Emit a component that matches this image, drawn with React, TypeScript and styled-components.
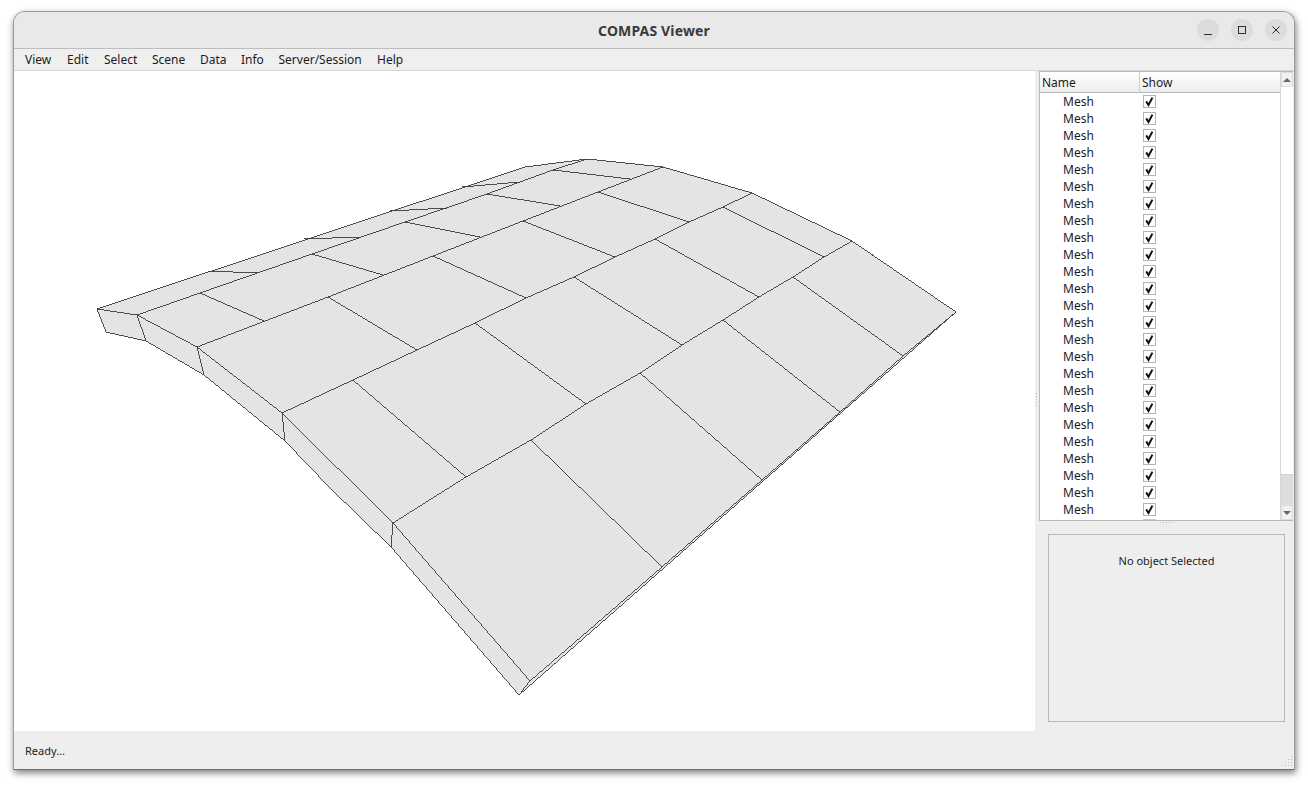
import React from 'react'
import styled, { createGlobalStyle } from 'styled-components'

const GlobalStyle = createGlobalStyle`
  html, body {
    margin: 0;
    padding: 0;
    background: #ffffff;
    font-family: "Noto Sans", "Liberation Sans", sans-serif;
    font-size: 12px;
    color: #1c1c1c;
  }
`

const MENU_ITEMS = [
  { label: 'View', width: 42 },
  { label: 'Edit', width: 37 },
  { label: 'Select', width: 48 },
  { label: 'Scene', width: 48 },
  { label: 'Data', width: 41 },
  { label: 'Info', width: 37.5 },
  { label: 'Server/Session', width: 98.5 },
  { label: 'Help', width: 40 },
]
const ROW_COUNT = 25

// mesh outlines, traced in page coordinates
const SILHOUETTE =
  '97,309 525,167 587,159 663,167 752,193 852,241 956,312 519,695 391,547 330,488 285,441 204,375 146,341 106,332'

const LINES = [
  // ridges, back to front
  '137,315 200,293 312,254 405,222 487,194 553,170 587,159',
  '197,347 328,297 433,256 523,221 598,192 663,167',
  '282,413 353,380 417,350 475,323 526,298 574,277 615,257 655,239 689,222 723,207 752,193',
  '393,523 466,477 531,440 586,404 640,373 682,345 723,320 759,297 793,277 824,257 852,241',
  // near edge
  '97,309 137,315 197,347 282,413 393,523 530,681',
  '521,692 530,681 662,567 762,480 840,412 903,356 956,312',
  // thickness ticks
  '137,315 146,341',
  '197,347 204,375',
  '282,413 285,441',
  '393,523 391,547',
  // top strip
  '208,271 258,273',
  '304,239 360,237',
  '390,211 447,208',
  '462,187 520,182',
  // ridge 1 to 2
  '200,293 264,321',
  '312,254 383,275',
  '405,222 480,237',
  '487,194 560,206',
  '553,170 630,179',
  // ridge 2 to 3
  '328,297 417,350',
  '433,256 526,298',
  '523,221 615,257',
  '598,192 689,222',
  // ridge 3 to 4
  '353,380 466,477',
  '475,323 586,404',
  '574,277 682,345',
  '655,239 759,297',
  '723,207 824,257',
  // ridge 4 to near edge
  '531,440 662,567',
  '640,373 762,480',
  '723,320 840,412',
  '793,277 903,356',
]

function App() {
  return (
    <Desktop>
      <GlobalStyle />
      <Window>
        <TitleBar>
          <span />
          <Title>COMPAS Viewer</Title>
          <WindowButtons>
            <RoundButton>
              <svg width="12" height="12" viewBox="0 0 12 12">
                <path d="M2 10.5h8" stroke="#2e2e2e" strokeWidth="1" fill="none" />
              </svg>
            </RoundButton>
            <RoundButton>
              <svg width="12" height="12" viewBox="0 0 12 12">
                <rect x="2.5" y="2.5" width="7" height="7" stroke="#2e2e2e" strokeWidth="1" fill="none" />
              </svg>
            </RoundButton>
            <RoundButton>
              <svg width="12" height="12" viewBox="0 0 12 12">
                <path d="M2.5 2.5l7 7M9.5 2.5l-7 7" stroke="#2e2e2e" strokeWidth="1" fill="none" />
              </svg>
            </RoundButton>
          </WindowButtons>
        </TitleBar>

        <MenuBar>
          {MENU_ITEMS.map((item) => (
            <MenuItem key={item.label} $width={item.width}>
              {item.label}
            </MenuItem>
          ))}
        </MenuBar>

        <Main>
          <Viewport>
            <svg width="1021" height="660" viewBox="14 71 1021 660">
              <polygon points={SILHOUETTE} fill="#e4e4e4" />
              <g fill="none" stroke="#3a3a3a" strokeWidth="0.9" shapeRendering="crispEdges">
                <polygon points={SILHOUETTE} />
                {LINES.map((points) => (
                  <polyline key={points} points={points} />
                ))}
              </g>
            </svg>
          </Viewport>

          <VerticalGrip />

          <SidePanel>
            <TreeBox>
              <TreeArea>
                <TreeHeader>
                  <HeaderCell $width={100}>Name</HeaderCell>
                  <HeaderCell>Show</HeaderCell>
                </TreeHeader>
                <Rows>
                  {Array.from({ length: ROW_COUNT }).map((_, i) => (
                    <Row key={i}>
                      <NameCell>Mesh</NameCell>
                      <CheckBox>
                        <svg width="11" height="11" viewBox="0 0 11 11">
                          <path d="M2.2 5.4l2.3 3.6 3.9-7.4" stroke="#111111" strokeWidth="2" fill="none" />
                        </svg>
                      </CheckBox>
                    </Row>
                  ))}
                  <ClippedCheck />
                </Rows>
              </TreeArea>
              <ScrollBar>
                <ScrollButton>
                  <ArrowUp />
                </ScrollButton>
                <ScrollThumb />
                <ScrollGroove />
                <ScrollButton>
                  <ArrowDown />
                </ScrollButton>
              </ScrollBar>
            </TreeBox>
            <HorizontalGrip />
            <PropertyBox>No object Selected</PropertyBox>
          </SidePanel>
        </Main>

        <StatusBar>
          Ready...
          <SizeGrip>
            <svg width="12" height="12" viewBox="0 0 12 12" fill="#bdbdbd">
              <rect x="10" y="0" width="1" height="1" />
              <rect x="10" y="3" width="1" height="1" />
              <rect x="7" y="3" width="1" height="1" />
              <rect x="10" y="6" width="1" height="1" />
              <rect x="7" y="6" width="1" height="1" />
              <rect x="4" y="6" width="1" height="1" />
              <rect x="10" y="9" width="1" height="1" />
              <rect x="7" y="9" width="1" height="1" />
              <rect x="4" y="9" width="1" height="1" />
              <rect x="1" y="9" width="1" height="1" />
            </svg>
          </SizeGrip>
        </StatusBar>
      </Window>
    </Desktop>
  )
}

const Desktop = styled.div`
  box-sizing: border-box;
  width: 1308px;
  height: 786px;
  padding: 11px 0 0 13px;
  overflow: hidden;
  background: #ffffff;
`

const Window = styled.div`
  box-sizing: border-box;
  width: 1282px;
  height: 759px;
  display: flex;
  flex-direction: column;
  border: 1px solid #9a9a9a;
  border-bottom-color: #6f6f6f;
  border-radius: 12px 12px 0 0;
  background: #eeeeee;
  box-shadow: 1px 3px 7px rgba(0, 0, 0, 0.5);
`

const TitleBar = styled.div`
  flex: none;
  height: 36px;
  display: grid;
  grid-template-columns: 1fr auto 1fr;
  align-items: center;
  background: #e9e9e9;
  border-bottom: 1px solid #bdbdbd;
  border-radius: 11px 11px 0 0;
`

const Title = styled.div`
  font-size: 14px;
  font-weight: 700;
  letter-spacing: 0.15px;
  color: #3a3a3a;
`

const WindowButtons = styled.div`
  display: flex;
  justify-content: flex-end;
  gap: 12px;
  padding-right: 7px;
`

const RoundButton = styled.div`
  width: 22px;
  height: 22px;
  border-radius: 50%;
  background: #dcdcdc;
  display: flex;
  align-items: center;
  justify-content: center;
`

const MenuBar = styled.div`
  flex: none;
  height: 21px;
  display: flex;
  align-items: center;
  padding-left: 11px;
  background: #efefef;
  border-bottom: 1px solid #d6d6d6;
`

const MenuItem = styled.div<{ $width: number }>`
  width: ${({ $width }) => $width}px;
  line-height: 21px;
`

const Main = styled.div`
  flex: none;
  height: 660px;
  display: flex;
`

const Viewport = styled.div`
  flex: none;
  width: 1021px;
  height: 660px;
  background: #ffffff;
  svg {
    display: block;
  }
`

const VerticalGrip = styled.div`
  flex: none;
  width: 1px;
  margin: 322px 2px 0 1px;
  height: 15px;
  background: repeating-linear-gradient(to bottom, #bbbbbb 0 1px, transparent 1px 3px);
`

const SidePanel = styled.div`
  flex: none;
  width: 255px;
  display: flex;
  flex-direction: column;
`

const TreeBox = styled.div`
  box-sizing: border-box;
  width: 254px;
  height: 450px;
  display: flex;
  background: #ffffff;
  border: 1px solid #b8b8b8;
  border-right: none;
`

const TreeArea = styled.div`
  flex: 1;
  min-width: 0;
  overflow: hidden;
`

const TreeHeader = styled.div`
  height: 20px;
  display: flex;
  background: linear-gradient(to bottom, #ffffff, #ececec);
  border-bottom: 1px solid #b8b8b8;
`

const HeaderCell = styled.div<{ $width?: number }>`
  box-sizing: border-box;
  ${({ $width }) => ($width ? `width: ${$width}px;` : 'flex: 1;')}
  padding-left: 2px;
  line-height: 21px;
  border-right: ${({ $width }) => ($width ? '1px solid #d0d0d0' : 'none')};
`

const Rows = styled.div`
  padding-top: 0;
`

const Row = styled.div`
  height: 17px;
  display: flex;
  align-items: center;
`

const NameCell = styled.div`
  box-sizing: border-box;
  width: 103px;
  padding-left: 23px;
  line-height: 17px;
`

const CheckBox = styled.div`
  box-sizing: border-box;
  width: 13px;
  height: 13px;
  display: flex;
  align-items: center;
  justify-content: center;
  background: #ffffff;
  border: 1px solid #b4b4b4;
`

// top edge of the next row's checkbox, cut off by the list
const ClippedCheck = styled.div`
  width: 13px;
  height: 2px;
  margin: 1px 0 0 103px;
  background: #c8c8c8;
`

const ScrollBar = styled.div`
  flex: none;
  width: 13px;
  display: flex;
  flex-direction: column;
  background: #ffffff;
  border-left: 1px solid #d8d8d8;
  box-sizing: border-box;
`

const ScrollButton = styled.div`
  flex: none;
  height: 15px;
  display: flex;
  align-items: center;
  justify-content: center;
  background: #f1f1f1;
  border: 1px solid #dcdcdc;
  box-sizing: border-box;
`

const ArrowUp = styled.div`
  width: 0;
  height: 0;
  border-left: 4px solid transparent;
  border-right: 4px solid transparent;
  border-bottom: 4px solid #666666;
`

const ArrowDown = styled.div`
  width: 0;
  height: 0;
  border-left: 4px solid transparent;
  border-right: 4px solid transparent;
  border-top: 4px solid #666666;
`

const ScrollThumb = styled.div`
  flex: none;
  height: 388px;
  background: #ffffff;
  border-bottom: 1px solid #d0d0d0;
  box-sizing: border-box;
`

const ScrollGroove = styled.div`
  flex: 1;
  background: #dddddd;
`

const HorizontalGrip = styled.div`
  flex: none;
  width: 15px;
  height: 1px;
  margin: 1px 0 0 121px;
  background: repeating-linear-gradient(to right, #bbbbbb 0 1px, transparent 1px 3px);
`

const PropertyBox = styled.div`
  box-sizing: border-box;
  width: 237px;
  height: 188px;
  margin: 11px 0 0 9px;
  padding-top: 18px;
  text-align: center;
  line-height: 15px;
  font-size: 11px;
  background: #eeeeee;
  border: 1px solid #b8b8b8;
`

const StatusBar = styled.div`
  flex: 1;
  position: relative;
  display: flex;
  align-items: center;
  padding-left: 11px;
  font-size: 11px;
  background: #eeeeee;
`

const SizeGrip = styled.div`
  position: absolute;
  right: 1px;
  bottom: 1px;
  width: 12px;
  height: 12px;
  svg {
    display: block;
  }
`

export default App
